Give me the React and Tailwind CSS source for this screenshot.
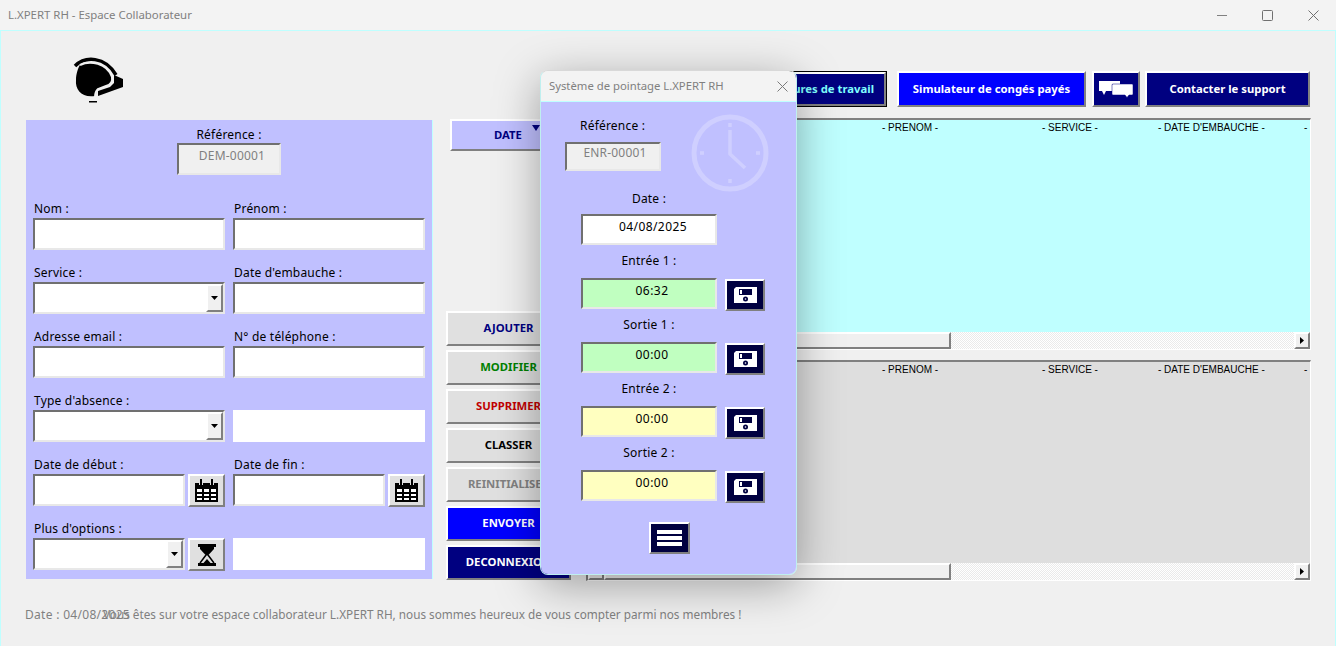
import React from 'react';

const raised = 'border-2 border-t-white border-l-white border-b-[#808080] border-r-[#808080]';
const sunken = 'border-2 border-t-[#707070] border-l-[#707070] border-b-[#e8e8e8] border-r-[#e8e8e8]';

function Field({ className = '', children }) {
  return <div className={`h-8 bg-white ${sunken} ${className}`}>{children}</div>;
}

function Caret() {
  return (
    <svg width="7" height="4" viewBox="0 0 7 4">
      <path d="M0 0H7L3.5 4Z" fill="#000" />
    </svg>
  );
}

function Combo({ className = '' }) {
  return (
    <Field className={`flex justify-end ${className}`}>
      <div className={`w-[17px] bg-[#f0f0f0] flex items-center justify-center ${raised}`}>
        <Caret />
      </div>
    </Field>
  );
}

function Label({ children }) {
  return <div className="h-8 flex items-end pb-[1px] pl-[1px] text-[12px] leading-4 tracking-[0.2px] text-black">{children}</div>;
}

function CalendarIcon() {
  return (
    <svg width="23" height="23" viewBox="0 0 23 23">
      <path d="M0 4H23V23H0Z" fill="#000" />
      <path d="M5 0H7V6H5ZM16 0H18V6H16Z" fill="#000" />
      <path d="M4 3H5V6H4ZM7 3H8V6H7ZM15 3H16V6H15ZM18 3H19V6H18Z" fill="#e0e0e0" />
      <path d="M2 10H7V13H2ZM9 10H14V13H9ZM16 10H21V13H16ZM2 15H7V17H2ZM9 15H14V17H9ZM16 15H21V17H16ZM2 19H7V21H2ZM9 19H14V21H9ZM16 19H21V21H16Z" fill="#fff" />
    </svg>
  );
}

function HourglassIcon() {
  return (
    <svg width="20" height="22" viewBox="0 0 20 22">
      <path d="M1 0H19V3H1ZM1 19H19V22H1Z" fill="#000" />
      <path d="M3 3H17V5L11 11.5H9L3 5Z" fill="#000" />
      <path d="M9 11L3 19M11 11L17 19" stroke="#000" strokeWidth="1.500" fill="none" />
      <path d="M10 15L13.500 19H6.500Z" fill="#000" />
    </svg>
  );
}

function IconButton({ children }) {
  return (
    <div className={`w-[37px] h-[33px] shrink-0 bg-[#e0e0e0] flex items-center justify-center ${raised}`}>{children}</div>
  );
}

function HeadsetLogo() {
  return (
    <svg width="56" height="50" viewBox="10 5 56 50">
      <path d="M20 15C30 10 47 13 52 27C53 33 50 35 46 36L38 39L35 46C22 48 15 40 16 30C16 24 18 18 20 15Z" fill="#000" />
      <path d="M15 16C25 6 45 6 56 25" stroke="#000" strokeWidth="3.500" fill="none" />
      <path d="M54 25L63 29V37L38 46V41L50 37L54 33Z" fill="#000" />
      <path d="M20 15C30 10 47 13 52 27C53 33 50 35 46 36L38 39C36 41 35 43 35 47" stroke="#f0f0f0" strokeWidth="2" fill="none" />
      <path d="M29 51H37V52.500H29Z" fill="#000" />
    </svg>
  );
}

function ChatIcon() {
  return (
    <svg width="34" height="17" viewBox="0 0 34 17">
      <path d="M0 0H21V3H13V10H7L5 14L3 10H0Z" fill="#fff" />
      <path d="M14 3H33Q34 3 34 4V13Q34 14 33 14H30L28 16.500L26 14H14Q13 14 13 13V4Q13 3 14 3Z" fill="#fff" stroke="#000080" strokeWidth="0.500" />
    </svg>
  );
}

function FloppyIcon() {
  return (
    <svg width="23" height="16" viewBox="0 0 23 16">
      <path d="M2 0H23V16H0V2Z" fill="#fff" />
      <path d="M5 2H18V8H5Z" fill="#000040" />
      <path d="M6 3H8V7H6Z" fill="#fff" />
      <circle cx="11.500" cy="12" r="2.500" fill="#000040" />
      <circle cx="11.500" cy="12" r="0.800" fill="#fff" />
    </svg>
  );
}

function ClockIcon() {
  return (
    <svg width="78" height="78" viewBox="0 0 78 78" fill="none" stroke="#cfcfff">
      <circle cx="39" cy="39" r="36" strokeWidth="5" />
      <path d="M39 16V40L54 54" strokeWidth="3.500" />
      <path d="M39 9V13M39 65V69M9 39H13M65 39H69" strokeWidth="3.500" />
    </svg>
  );
}

function Scrollbar() {
  return (
    <div className="h-[17px] flex shrink-0 bg-white">
      <div className={`w-4 bg-[#f0f0f0] ${raised}`} />
      <div className={`w-[347px] bg-[#f0f0f0] ${raised}`} />
      <div className="flex-1 bg-[conic-gradient(#eaeaea_25%,#ffffff_0_50%,#eaeaea_0_75%,#ffffff_0)] bg-[length:2px_2px]" />
      <div className={`w-4 bg-[#f0f0f0] flex items-center justify-center ${raised}`}>
        <svg width="4" height="7" viewBox="0 0 4 7">
          <path d="M0 0L4 3.500L0 7Z" fill="#000" />
        </svg>
      </div>
    </div>
  );
}

function DataList({ className, bg }) {
  return (
    <div className={`flex flex-col overflow-hidden border-t-2 border-l-2 border-r border-b border-t-[#808080] border-l-[#808080] border-b-white border-r-white ${className}`}>
      <div className={`flex-1 overflow-hidden ${bg}`}>
        <div className="flex whitespace-nowrap pt-[1px] text-[10px] leading-[14px] text-black font-['Liberation_Sans',sans-serif]">
          <div className="w-[120px] pl-1 shrink-0">- REFERENCE -</div>
          <div className="w-[174px] shrink-0">- NOM -</div>
          <div className="w-[160px] shrink-0">- PRENOM -</div>
          <div className="w-[116px] shrink-0">- SERVICE -</div>
          <div className="w-[146px] shrink-0">- DATE D'EMBAUCHE -</div>
          <div className="shrink-0">- EMAIL -</div>
        </div>
      </div>
      <Scrollbar />
    </div>
  );
}

function ActionButton({ children, className }) {
  return (
    <div className={`h-[35px] flex items-center justify-center text-[11.3px] font-bold whitespace-nowrap ${raised} ${className}`}>
      {children}
    </div>
  );
}

function TimeRow({ label, value, bg }) {
  return (
    <div className="flex flex-col">
      <div className="w-[136px] h-[33px] pb-[9px] flex items-end justify-center text-[12px] leading-4 tracking-[0.2px] text-black">{label}</div>
      <div className="h-[31px] flex gap-2 items-start">
        <div className={`w-[136px] h-[31px] pl-[6px] text-center text-[12px] leading-[22px] tracking-[0.5px] text-black ${sunken} ${bg}`}>{value}</div>
        <div className={`w-10 h-8 mt-[1px] bg-[#000040] flex items-center justify-center ${raised}`}>
          <FloppyIcon />
        </div>
      </div>
    </div>
  );
}

function PointageModal() {
  return (
    <div className="absolute left-[540px] top-[70px] w-[257px] h-[505px] flex flex-col rounded-lg overflow-hidden border border-[#bfefef] border-t-[#d8d8d8] shadow-[0_10px_45px_rgba(0,0,0,0.35)]">
      <div className="h-[31px] shrink-0 bg-[#f3f3f3] flex items-center justify-between pl-2 pr-[8px] border-b border-[#bfffff]">
        <span className="text-[11.3px] text-[#808080]">Système de pointage L.XPERT RH</span>
        <svg width="11" height="11" viewBox="0 0 11 11" stroke="#7a7a7a" strokeWidth="1">
          <path d="M0.500 0.500L10.500 10.500M10.500 0.500L0.500 10.500" />
        </svg>
      </div>
      <div className="relative flex-1 bg-[#c0c0ff] flex flex-col">
        <div className="absolute left-[150px] top-[12px]">
          <ClockIcon />
        </div>
        <div className="pl-[39px] pt-[16px] text-[12px] leading-4 tracking-[0.2px] text-black">Référence :</div>
        <div className={`ml-[24px] mt-[8px] w-[96px] h-[29px] bg-[#f0f0f0] pl-[4px] pt-[1px] text-center text-[12px] leading-4 tracking-[0.2px] text-[#808080] ${sunken}`}>
          ENR-00001
        </div>
        <div className="ml-[40px]">
          <div className="w-[136px] h-[36px] flex items-end justify-center text-[12px] leading-4 tracking-[0.2px] text-black">Date :</div>
          <div className={`mt-[7px] w-[136px] h-[31px] pl-[8px] bg-white text-center text-[12px] leading-[22px] tracking-[0.4px] text-black ${sunken}`}>04/08/2025</div>
          <TimeRow label="Entrée 1 :" value="06:32" bg="bg-[#c0ffc0]" />
          <TimeRow label="Sortie 1 :" value="00:00" bg="bg-[#c0ffc0]" />
          <TimeRow label="Entrée 2 :" value="00:00" bg="bg-[#ffffc0]" />
          <TimeRow label="Sortie 2 :" value="00:00" bg="bg-[#ffffc0]" />
        </div>
        <div className={`ml-[108px] mt-[21px] w-[41px] h-8 bg-[#000040] flex flex-col items-center justify-center gap-[2px] ${raised}`}>
          <div className="w-[25px] h-1 bg-white" />
          <div className="w-[25px] h-1 bg-white" />
          <div className="w-[25px] h-1 bg-white" />
        </div>
      </div>
    </div>
  );
}

export default function App() {
  return (
    <div className="relative w-[1336px] h-[646px] overflow-hidden bg-[#f0f0f0] font-['Noto_Sans',sans-serif]">
      {/* barre de titre */}
      <div className="h-[30px] bg-[#f3f3f3] flex items-center justify-between pl-2 pr-[17px]">
        <span className="text-[11.4px] text-[#808080]">L.XPERT RH - Espace Collaborateur</span>
        <div className="flex items-center gap-[35px]">
          <svg width="10" height="10" viewBox="0 0 10 10" stroke="#808080"><path d="M0 5.500H10" /></svg>
          <svg width="11" height="11" viewBox="0 0 11 11" fill="none" stroke="#707070"><rect x="0.500" y="0.500" width="10" height="10" rx="1" /></svg>
          <svg width="11" height="11" viewBox="0 0 11 11" stroke="#707070"><path d="M0.500 0.500L10.500 10.500M10.500 0.500L0.500 10.500" /></svg>
        </div>
      </div>

      <div className="h-[616px] border-t border-x border-[#bfffff]">
        {/* entete */}
        <div className="h-[76px] pt-[24px] px-[25px] flex items-start justify-between">
          <div className="ml-[44px]"><HeadsetLogo /></div>
          <div className="flex self-end h-9 text-[11.3px] font-bold whitespace-nowrap">
            <div className="border border-black">
              <div className="h-full pl-[12px] pr-[10px] flex items-center bg-[#000080] text-[#80ffff] border-2 border-t-white border-l-white border-b-[#808080] border-r-[#808080]">
                Mes heures de travail
              </div>
            </div>
            <div className={`ml-[10px] w-[189px] flex items-center justify-center bg-[#0000ff] text-white ${raised}`}>
              Simulateur de congés payés
            </div>
            <div className={`ml-[6px] w-[48px] flex items-center justify-center bg-[#000080] ${raised}`}>
              <ChatIcon />
            </div>
            <div className={`ml-[5px] w-[165px] flex items-center justify-center bg-[#000080] text-white ${raised}`}>
              Contacter le support
            </div>
          </div>
        </div>

        {/* zone principale */}
        <div className="mt-[11px] h-[463px] pl-[25px] flex items-start">
          <div className="mt-[2px] w-[407px] h-[459px] bg-[#c0c0ff] px-[7px] pt-[7px] border-r border-[#bfffff]">
            <div className="flex flex-col items-center">
              <div className="text-[12px] leading-4 tracking-[0.2px] text-black">Référence :</div>
              <div className={`w-[104px] h-8 bg-[#f0f0f0] pl-[6px] pt-[3px] text-center text-[12px] leading-4 tracking-[0.2px] text-[#808080] ${sunken}`}>
                DEM-00001
              </div>
            </div>
            <div className="mt-[11px] grid grid-cols-[192px_192px] gap-x-2">
              <div><Label>Nom :</Label><Field /></div>
              <div><Label>Prénom :</Label><Field /></div>
              <div><Label>Service :</Label><Combo /></div>
              <div><Label>Date d'embauche :</Label><Field /></div>
              <div><Label>Adresse email :</Label><Field /></div>
              <div><Label>N° de téléphone :</Label><Field /></div>
              <div><Label>Type d'absence :</Label><Combo /></div>
              <div className="pt-8"><div className="h-8 bg-white" /></div>
              <div>
                <Label>Date de début :</Label>
                <div className="h-8 flex gap-[3px] items-start"><Field className="flex-1" /><IconButton><CalendarIcon /></IconButton></div>
              </div>
              <div>
                <Label>Date de fin :</Label>
                <div className="h-8 flex gap-[3px] items-start"><Field className="flex-1" /><IconButton><CalendarIcon /></IconButton></div>
              </div>
              <div>
                <Label>Plus d'options :</Label>
                <div className="h-8 flex gap-[3px] items-start"><Combo className="flex-1" /><IconButton><HourglassIcon /></IconButton></div>
              </div>
              <div className="pt-8"><div className="h-8 bg-white" /></div>
            </div>
          </div>

          <div className="ml-[13px] w-[125px] h-[462px] flex flex-col">
            <div className={`relative mt-[1px] ml-1 w-[116px] h-8 bg-[#c0c0ff] flex items-center justify-center text-[11.3px] font-bold text-[#000080] ${raised}`}>
              DATE
              <svg className="absolute right-[24px] top-[4px]" width="8" height="6" viewBox="0 0 8 6">
                <path d="M0 0H8L4 6Z" fill="#000080" />
              </svg>
            </div>
            <div className="mt-auto flex flex-col gap-1">
              <ActionButton className="bg-[#e0e0e0] text-[#000080]">AJOUTER</ActionButton>
              <ActionButton className="bg-[#e0e0e0] text-[#008000]">MODIFIER</ActionButton>
              <ActionButton className="bg-[#e0e0e0] text-[#c00000]">SUPPRIMER</ActionButton>
              <ActionButton className="bg-[#e0e0e0] text-black">CLASSER</ActionButton>
              <ActionButton className="bg-[#e0e0e0] text-[#808080]">REINITIALISER</ActionButton>
              <ActionButton className="bg-[#0000ff] text-white">ENVOYER</ActionButton>
              <ActionButton className="bg-[#000080] text-white">DECONNEXION</ActionButton>
            </div>
          </div>

          <div className="ml-[15px] w-[725px] flex flex-col gap-[10px]">
            <DataList className="h-[232px]" bg="bg-[#bfffff]" />
            <DataList className="h-[221px]" bg="bg-[#dedede]" />
          </div>
        </div>

        {/* bas de page */}
        <div className="mt-[25px] ml-[24px] flex items-baseline text-[12px] leading-4 text-[#808080] whitespace-nowrap">
          <div className="w-[78px] tracking-[0.3px]">Date : 04/08/2025</div>
          <div className="text-[11.75px]">Vous êtes sur votre espace collaborateur L.XPERT RH, nous sommes heureux de vous compter parmi nos membres !</div>
        </div>
      </div>

      <PointageModal />
    </div>
  );
}
